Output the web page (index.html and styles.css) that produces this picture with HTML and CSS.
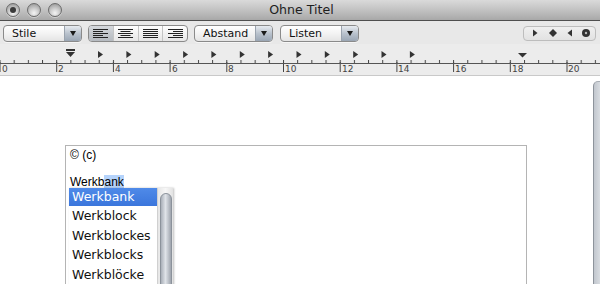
FILE: index.html
```html
<!DOCTYPE html>
<html lang="de">
<head>
<meta charset="utf-8">
<title>Ohne Titel</title>
<link rel="stylesheet" href="styles.css">
</head>
<body>
<div class="window">
  <div class="titlebar">
    <div class="lights">
      <span class="light close"></span>
      <span class="light"></span>
      <span class="light"></span>
    </div>
    <div class="title">Ohne Titel</div>
  </div>
  <div class="toolbar">
    <div class="popup p-stile"><span class="plabel">Stile</span><span class="parrow"></span></div>
    <div class="seg align">
      <span class="segitem on"><svg width="15" height="9" viewBox="0 0 15 9"><path d="M0 .5h15M0 2.5h10M0 4.5h15M0 6.5h10M0 8.5h15" stroke="#222"/></svg></span>
      <span class="segitem"><svg width="15" height="9" viewBox="0 0 15 9"><path d="M0 .5h15M2.5 2.5h10M0 4.5h15M2.5 6.5h10M0 8.5h15" stroke="#222"/></svg></span>
      <span class="segitem"><svg width="15" height="9" viewBox="0 0 15 9"><path d="M0 .5h15M0 2.5h15M0 4.5h15M0 6.5h15M0 8.5h15" stroke="#222"/></svg></span>
      <span class="segitem"><svg width="15" height="9" viewBox="0 0 15 9"><path d="M0 .5h15M5 2.5h10M0 4.5h15M5 6.5h10M0 8.5h15" stroke="#222"/></svg></span>
    </div>
    <div class="popup p-abstand"><span class="plabel">Abstand</span><span class="parrow"></span></div>
    <div class="popup p-listen"><span class="plabel">Listen</span><span class="parrow"></span></div>
    <div class="spacer"></div>
    <div class="seg nav">
      <svg width="70" height="12" viewBox="0 0 70 12">
        <path d="M8 2.5v7l4.5-3.5z" fill="#333"/>
        <path d="M28 2l4 4-4 4-4-4z" fill="#333"/>
        <path d="M47 2.5v7l-4.5-3.5z" fill="#333"/>
        <circle cx="61" cy="6" r="4" fill="#333"/>
        <circle cx="61" cy="6" r="1.2" fill="#bbb"/>
      </svg>
    </div>
  </div>
  <div class="ruler">
    <svg width="600" height="31" viewBox="0 0 600 31">
      <defs>
        <pattern id="minor" x="-0.5" y="0" width="14.175" height="31" patternUnits="userSpaceOnUse">
          <rect x="0" y="16" width="1" height="3" fill="#444"/>
        </pattern>
        <pattern id="major" x="-0.5" y="0" width="56.7" height="31" patternUnits="userSpaceOnUse">
          <rect x="0" y="18" width="1" height="10" fill="#444"/>
        </pattern>
      </defs>
      <rect x="0" y="16" width="600" height="3" fill="url(#minor)"/>
      <rect x="0" y="18" width="600" height="10" fill="url(#major)"/>
      <rect x="0" y="19" width="600" height="1" fill="#555"/>
      <g class="rnum" font-size="9" fill="#444">
        <text x="2" y="28">0</text>
        <text x="58" y="28">2</text>
        <text x="115" y="28">4</text>
        <text x="172" y="28">6</text>
        <text x="228" y="28">8</text>
        <text x="285" y="28">10</text>
        <text x="342" y="28">12</text>
        <text x="398" y="28">14</text>
        <text x="455" y="28">16</text>
        <text x="512" y="28">18</text>
        <text x="568" y="28">20</text>
      </g>
      <g fill="#333">
        <rect x="66" y="5" width="9" height="2"/>
        <path d="M66 8h9l-4.5 5z"/>
        <path d="M518 9h9l-4.5 4.5z"/>
        <path d="M98 7v7l5-3.5z"/>
        <path d="M126.4 7v7l5-3.5z"/>
        <path d="M154.7 7v7l5-3.5z"/>
        <path d="M183.1 7v7l5-3.5z"/>
        <path d="M211.4 7v7l5-3.5z"/>
        <path d="M239.8 7v7l5-3.5z"/>
        <path d="M268.1 7v7l5-3.5z"/>
        <path d="M296.5 7v7l5-3.5z"/>
        <path d="M324.8 7v7l5-3.5z"/>
        <path d="M353.2 7v7l5-3.5z"/>
        <path d="M381.5 7v7l5-3.5z"/>
        <path d="M409.9 7v7l5-3.5z"/>
      </g>
    </svg>
  </div>
  <div class="content">
    <div class="page">
      <div class="textbox">
        <p class="line">© (c)</p>
        <p class="line">&nbsp;</p>
        <p class="line">Werkb<span class="hl">ank</span></p>
        <div class="completion">
          <ul class="clist">
            <li class="sel">Werkbank</li>
            <li>Werkblock</li>
            <li>Werkblockes</li>
            <li>Werkblocks</li>
            <li>Werkblöcke</li>
          </ul>
          <div class="cscroll"><div class="cthumb"></div></div>
        </div>
      </div>
    </div>
    <div class="vscroll"></div>
  </div>
</div>
</body>
</html>
```

FILE: styles.css
```css
* { box-sizing: border-box; }
html, body { margin: 0; padding: 0; }
body {
  width: 600px;
  height: 284px;
  overflow: hidden;
  background: #fff;
  font-family: "DejaVu Sans", "Liberation Sans", sans-serif;
}
.window {
  display: flex;
  flex-direction: column;
  height: 284px;
}
.titlebar {
  height: 21px;
  flex: none;
  display: flex;
  align-items: center;
  position: relative;
  background: linear-gradient(#dadada, #bdbdbd 60%, #a8a8a8);
  border-bottom: 1px solid #4f4f4f;
}
.lights {
  display: flex;
  gap: 7px;
  padding-left: 6px;
  position: relative;
  z-index: 1;
}
.light {
  width: 14px;
  height: 14px;
  border-radius: 50%;
  border: 1px solid #6c6c6c;
  background: radial-gradient(circle at 50% 75%, #f4f4f4 0, #cfcfcf 40%, #8d8d8d 100%);
  box-shadow: 0 1px 0 rgba(255,255,255,0.4);
  position: relative;
}
.light.close::after {
  content: "";
  position: absolute;
  left: 3px;
  top: 3px;
  width: 6px;
  height: 6px;
  border-radius: 50%;
  background: #3b3b3b;
}
.title {
  position: absolute;
  left: 0;
  right: 0;
  top: 2px;
  text-align: center;
  font-size: 12.6px;
  color: #1e1e1e;
  padding-left: 3px;
}
.toolbar {
  height: 23px;
  flex: none;
  display: flex;
  align-items: center;
  padding: 1px 4px 0 3px;
  background: #e8e8e8;
}
.popup {
  height: 17px;
  display: flex;
  align-items: stretch;
  border: 1px solid #8a8a8a;
  border-radius: 4px;
  background: linear-gradient(#ffffff, #f3f3f3 50%, #e4e4e4);
  overflow: hidden;
  box-shadow: 0 1px 0 rgba(255,255,255,0.6);
}
.plabel {
  flex: 1;
  font-size: 11px;
  line-height: 15px;
  padding-left: 8px;
  color: #111;
}
.parrow {
  width: 17px;
  flex: none;
  border-left: 1px solid #9aa3ae;
  background: linear-gradient(#e7ebf0, #b9c2cd 50%, #9aa6b4);
  position: relative;
}
.parrow::after {
  content: "";
  position: absolute;
  left: 5px;
  top: 5px;
  border-left: 3.5px solid transparent;
  border-right: 3.5px solid transparent;
  border-top: 5px solid #1a1a1a;
}
.p-stile { width: 79px; }
.p-abstand { width: 79px; margin-left: 6px; }
.p-listen { width: 79px; margin-left: 7px; }
.seg {
  display: flex;
  height: 17px;
  border: 1px solid #8a8a8a;
  border-radius: 4px;
  overflow: hidden;
  background: linear-gradient(#ffffff, #f2f2f2 50%, #e6e6e6);
}
.align { width: 100px; margin-left: 6px; }
.segitem {
  flex: 1;
  display: flex;
  align-items: center;
  justify-content: center;
  border-left: 1px solid #c4c4c4;
}
.segitem:first-child { border-left: none; }
.segitem.on {
  background: linear-gradient(#d6d9dd, #c3c7cc 50%, #b6bbc1);
}
.spacer { flex: 1; }
.nav {
  width: 73px;
  height: 15px;
  border-color: #bdbdbd;
  background: linear-gradient(#efefef, #e2e2e2);
  align-items: center;
  padding-left: 1px;
}
.ruler {
  height: 32px;
  flex: none;
  background: #ececec;
  border-bottom: 1px solid #c9c9c9;
}
.ruler svg { display: block; }
.rnum { font-family: "DejaVu Sans", sans-serif; }
.content {
  flex: 1;
  display: flex;
  background: #fff;
  min-height: 0;
  overflow: hidden;
}
.page {
  flex: 1;
  padding: 69px 0 0 65px;
}
.textbox {
  width: 462px;
  height: 200px;
  border: 1px solid #b4b4b4;
  padding: 3px 4px;
  position: relative;
  font-family: "Liberation Sans", Arial, sans-serif;
  font-size: 12px;
  color: #000;
}
.line {
  margin: 0;
  line-height: 13.5px;
}
.hl { background: #b5d3fb; }
.completion {
  position: absolute;
  left: 3px;
  top: 42px;
  width: 104px;
  height: 110px;
  display: flex;
  background: #fff;
  box-shadow: 1px 0 2px rgba(0,0,0,0.25);
}
.clist {
  list-style: none;
  margin: 0;
  padding: 0;
  width: 88px;
  font-family: "DejaVu Sans", sans-serif;
  font-size: 12.5px;
  color: #111;
}
.clist li {
  height: 19.4px;
  line-height: 18px;
  padding: 1.4px 0 0 3px;
}
.clist li.sel {
  height: 18px;
  line-height: 18px;
  padding-top: 0;
  color: #fff;
  background: linear-gradient(#4f8ae8, #3b76dc);
}
.cscroll {
  flex: 1;
  background: linear-gradient(90deg, #e6e6e6, #f7f7f7 50%, #e2e2e2);
  border-left: 1px solid #d0d0d0;
  padding: 5px 1px 0 2px;
}
.cthumb {
  height: 120px;
  border-radius: 6px 6px 0 0;
  border: 1px solid #8b929b;
  background: linear-gradient(90deg, #a9afb8, #dfe3e8 45%, #c2c7ce 70%, #9ea4ad);
}
.vscroll {
  width: 7px;
  flex: none;
  margin-top: 5px;
  border-left: 1px solid #8e949c;
  border-top: 1px solid #a8adb4;
  border-radius: 5px 0 0 0;
  background: linear-gradient(90deg, #c2c7ce, #d8dce1);
}
```
